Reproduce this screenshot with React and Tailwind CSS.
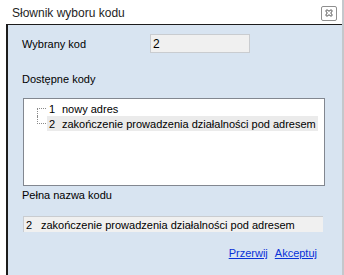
const items = [
  { code: "1", name: "nowy adres" },
  { code: "2", name: "zakończenie prowadzenia działalności pod adresem" },
];

export default function App() {
  const selected = items[1];

  return (
    <div
      className="w-[344px] h-[275px] overflow-hidden bg-white flex flex-col border-r-2 border-[#c4c8cc]"
      style={{ fontFamily: '"Liberation Sans", Arial, sans-serif' }}
    >
      <div className="h-[24px] shrink-0 flex items-center pl-[12px] pr-[5px]">
        <span className="text-[12px] text-[#1e1e1e] flex-1 pt-[1px]">Słownik wyboru kodu</span>
        <button className="w-[16px] h-[15px] rounded-[2px] border border-[#8f8f8f] bg-white flex items-center justify-center mt-[2px]">
          <svg width="8" height="8" viewBox="0 0 8 8">
            <path d="M1 1h2v1h2V1h2v2H6v2h1v2H5V6H3v1H1V5h1V3H1z" fill="none" stroke="#555" strokeWidth="0.8" />
          </svg>
        </button>
      </div>

      <div className="flex-1 ml-[6px] border-l-2 border-t border-[#1c1c1c] flex">
        <div className="flex-1 bg-[#d8e4f1] pl-[14px] pt-[9px] text-[11px] text-black leading-[14px]">
          <div className="flex items-center h-[19px]">
            <span className="w-[128px]">Wybrany kod</span>
            <div className="w-[100px] h-[19px] bg-[#f0f0f0] border border-[#c9ccd0] flex items-center pl-[2px] text-[12px]">
              2
            </div>
          </div>

          <div className="mt-[19px]">Dostępne kody</div>

          <div className="mt-[12px] ml-[1px] w-[302px] h-[88px] bg-white border border-[#828790] pt-[2px] whitespace-nowrap">
            {items.map((it, idx) => (
              <div key={it.code} className="flex items-center h-[15px]">
                <div className="w-[23px] h-[15px] relative shrink-0">
                  <span
                    className={`absolute left-[13px] w-0 border-l border-dotted border-[#8a8a8a] ${
                      idx === 0 ? "top-[7px] h-[8px]" : "top-0 h-[8px]"
                    }`}
                  />
                  <span className="absolute left-[13px] top-[7px] w-[9px] border-t border-dotted border-[#8a8a8a]" />
                </div>
                <div
                  className={`flex h-[15px] items-center pl-[2px] pr-[2px] ${
                    it.code === selected.code ? "bg-[#ebebeb]" : ""
                  }`}
                >
                  <span className="w-[13px]">{it.code}</span>
                  <span>{it.name}</span>
                </div>
              </div>
            ))}
          </div>

          <div className="mt-[2px]">Pełna nazwa kodu</div>

          <div className="mt-[14px] ml-[1px] w-[300px] h-[16px] bg-[#f0f0f0] border-t border-l border-[#c9ccd0] flex items-center pl-[2px] whitespace-nowrap">
            <span className="w-[15px]">{selected.code}</span>
            <span>{selected.name}</span>
          </div>

          <div className="mt-[14px] flex justify-end gap-[7px] pr-[25px] text-[11px] text-[#0a32d8]">
            <a className="underline cursor-pointer">Przerwij</a>
            <a className="underline cursor-pointer">Akceptuj</a>
          </div>
        </div>
      </div>
    </div>
  );
}
